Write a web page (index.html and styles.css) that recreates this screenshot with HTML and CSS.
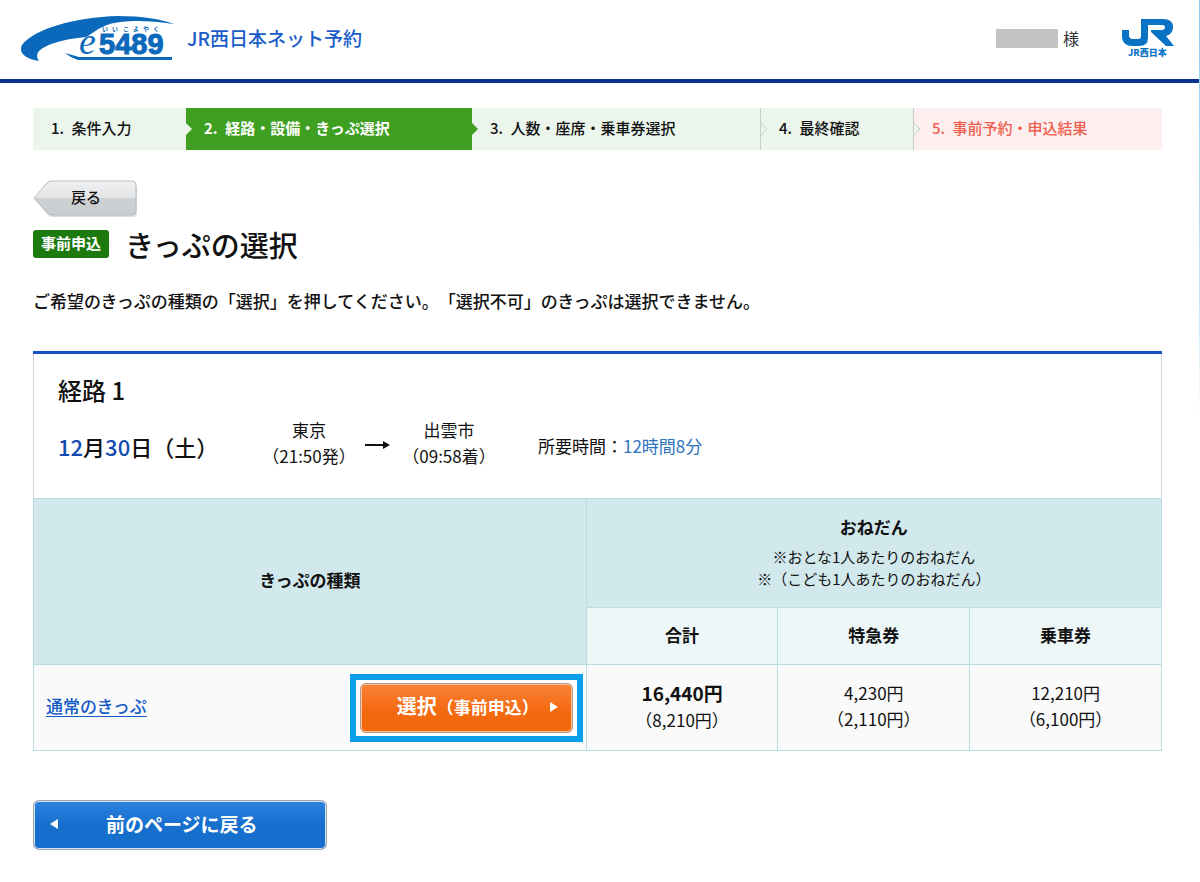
FILE: index.html
```html
<!DOCTYPE html>
<html lang="ja">
<head>
<meta charset="utf-8">
<meta name="viewport" content="width=device-width, initial-scale=1">
<title>きっぷの選択 | JR西日本ネット予約</title>
<link rel="stylesheet" href="styles.css">
</head>
<body>
<header class="site-header">
  <a class="brand" href="#" aria-label="e5489">
    <svg class="brand-logo" viewBox="0 -2 156 48" width="156" height="48" aria-hidden="true">
      <path fill="#0a69bb" d="M19 45C6 43-2 37 2 29C14 13 55 1 98 0C122 0 141 3 154 8C128 4 104 4 90 8C77 12 74 17 66 21C44 23 26 28 19 35C16 39 17 42 19 45Z"/>
      <path fill="#0a69bb" d="M45 37L59 41H152V44H58Q51 42 45 37Z"/>
      <text class="logo-ruby" x="82 92 103 113 123 133" y="15">いいこよやく</text>
      <text class="logo-e" x="59" y="38">e</text>
      <text class="logo-num" x="79" y="38">5489</text>
    </svg>
  </a>
  <span class="service-name">JR西日本ネット予約</span>
  <div class="user"><span class="user-mask"></span><span>様</span></div>
  <svg class="jr-logo" viewBox="0 0 54 40" width="54" height="40" role="img" aria-label="JR西日本">
    <path fill="#0873c4" d="M1 12H8V17Q8 21 12 21H17Q20 21 20 18V1H42Q52 1 52 9Q52 16 45 18L53 28H45L30 14V12H41Q44 12 44 9Q44 7 41 7H27V20Q27 28 18 28H12Q1 28 1 18Z"/>
    <text class="jr-name" x="7" y="38">JR西日本</text>
  </svg>
</header>

<main class="page">
  <ol class="steps">
    <li class="step">1.&ensp;条件入力</li>
    <li class="step step-current" aria-current="step">
      <svg class="step-mark" viewBox="0 0 8 14" width="8" height="14" aria-hidden="true"><path fill="#ebf5eb" d="M0 1L6 7L0 13Z"/></svg>
      2.&ensp;経路・設備・きっぷ選択</li>
    <li class="step">
      <svg class="step-mark" viewBox="0 0 8 14" width="8" height="14" aria-hidden="true"><path fill="#3f9f21" d="M0 1L6 7L0 13Z"/></svg>
      3.&ensp;人数・座席・乗車券選択</li>
    <li class="step step-line">
      <svg class="step-mark" viewBox="0 0 8 14" width="8" height="14" aria-hidden="true"><path fill="#ebf5eb" stroke="#c5cec6" d="M0 1L6 7L0 13"/></svg>
      4.&ensp;最終確認</li>
    <li class="step step-line step-result">
      <svg class="step-mark" viewBox="0 0 8 14" width="8" height="14" aria-hidden="true"><path fill="#ebf5eb" stroke="#c5cec6" d="M0 1L6 7L0 13"/></svg>
      5.&ensp;事前予約・申込結果</li>
  </ol>

  <button class="back-small" type="button">
    <svg class="back-shape" viewBox="0 0 106 38" width="106" height="38" aria-hidden="true">
      <defs>
        <linearGradient id="silver" x1="0" y1="0" x2="0" y2="1">
          <stop offset="0" stop-color="#f0f1f2"/><stop offset=".5" stop-color="#e2e4e6"/>
          <stop offset=".51" stop-color="#cdd1d4"/><stop offset="1" stop-color="#c9cdcf"/>
        </linearGradient>
      </defs>
      <path fill="#dcdcdc" d="M3 20L15 35Q17 37 20 37H100Q104 37 104 33V7Z"/>
      <path fill="url(#silver)" stroke="#b9bcbe" d="M1 18L14 3Q16 1 19 1H99Q103 1 103 5V31Q103 35 99 35H19Q16 35 14 33Z"/>
    </svg>
    <span class="back-label">戻る</span>
  </button>

  <div class="title-row">
    <span class="badge">事前申込</span>
    <h1 class="title">きっぷの選択</h1>
  </div>
  <p class="lead">ご希望のきっぷの種類の「選択」を押してください。「選択不可」のきっぷは選択できません。</p>

  <section class="route">
    <div class="route-info">
      <h2 class="route-title">経路 1</h2>
      <div class="route-row">
        <p class="date"><b>12</b>月<b>30</b>日（土）</p>
        <p class="station">東京<br>（21:50発）</p>
        <svg class="arrow" viewBox="0 0 26 10" width="26" height="10" aria-hidden="true"><path fill="#111" d="M0 4H18V1L25 5L18 9V6H0Z"/></svg>
        <p class="station">出雲市<br>（09:58着）</p>
        <p class="duration">所要時間：<span>12時間8分</span></p>
      </div>
    </div>
    <table class="fares">
      <colgroup><col class="col-kind"><col class="col-fare"><col class="col-fare"><col class="col-fare"></colgroup>
      <thead>
        <tr class="row-group">
          <th rowspan="2" scope="col">きっぷの種類</th>
          <th colspan="3" scope="colgroup">おねだん
            <span class="note">※おとな1人あたりのおねだん<br>※（こども1人あたりのおねだん）</span></th>
        </tr>
        <tr class="row-sub"><th scope="col">合計</th><th scope="col">特急券</th><th scope="col">乗車券</th></tr>
      </thead>
      <tbody>
        <tr>
          <td class="kind"><div class="kind-row">
            <a class="kind-link" href="#">通常のきっぷ</a>
            <div class="highlight"><button class="btn btn-select" type="button"><span>選択<span class="btn-sub">（事前申込）</span></span>
              <svg viewBox="0 0 8 10" width="8" height="10" aria-hidden="true"><path fill="#fff" d="M0 0L8 5L0 10Z"/></svg></button></div>
          </div></td>
          <td class="fare"><strong class="total">16,440円</strong><br>（8,210円）</td>
          <td class="fare">4,230円<br>（2,110円）</td>
          <td class="fare">12,210円<br>（6,100円）</td>
        </tr>
      </tbody>
    </table>
  </section>

  <button class="btn btn-back" type="button">
    <svg viewBox="0 0 8 10" width="8" height="10" aria-hidden="true"><path fill="#fff" d="M8 0L0 5L8 10Z"/></svg>
    <span>前のページに戻る</span>
  </button>
</main>
</body>
</html>
```
FILE: styles.css
```css
* { box-sizing: border-box; }
body {
  margin: 0;
  min-height: 100vh;
  background: linear-gradient(#8fcbf5, #c4e4fa 300px, #fff 420px) right top / 1px 420px no-repeat #fff;
  color: #111;
  font: 17px/26px "Noto Sans CJK JP", sans-serif;
  text-spacing-trim: space-all;
}
h1, h2, p, ol { margin: 0; padding: 0; }
button { font-family: inherit; cursor: pointer; }

.site-header {
  display: flex;
  align-items: center;
  height: 83px;
  margin-right: 1px;
  padding: 0 24px 3px 20px;
  border-bottom: 4px solid #0b3190;
}
.brand { display: flex; margin-right: 11px; }
.brand-logo { overflow: visible; }
.logo-ruby { fill: #0a69bb; font-size: 6px; font-weight: 700; }
.logo-e { fill: #0a69bb; font: italic 38px "Liberation Serif", serif; }
.logo-num { fill: #0a69bb; font: bold 29px "Liberation Sans", sans-serif; stroke: #0a69bb; stroke-width: 1; }
.service-name { color: #1a5cc8; font-size: 19px; font-weight: 500; }
.user { display: flex; align-items: center; gap: 5px; margin-left: auto; font-size: 16px; color: #333; }
.user-mask { width: 62px; height: 19px; background: #c3c3c3; }
.jr-logo { margin-left: 42px; }
.jr-name { fill: #0873c4; font-size: 9px; font-weight: 900; }

.page { padding: 25px 38px 32px 33px; }
.steps {
  display: grid;
  grid-template-columns: 153fr 286fr 288fr 153fr 249fr;
  list-style: none;
  font-size: 15px;
  font-weight: 500;
}
.step { position: relative; padding: 7px 0 9px 18px; background: #ebf5eb; white-space: nowrap; }
.step-current { background: #3f9f21; color: #fff; font-weight: 700; }
.step-line { border-left: 1px solid #c5cec6; }
.step-result { background: #fdeef0; color: #ee604c; }
.step-mark { position: absolute; left: 0; top: 14px; }

.back-small {
  position: relative;
  display: block;
  width: 106px;
  height: 38px;
  margin-top: 30px;
  padding: 0 0 6px;
  border: 0;
  background: none;
  color: #111;
  font-size: 15px;
  font-weight: 500;
}
.back-shape { position: absolute; left: 0; top: 0; }
.back-label { position: relative; }

.title-row { display: flex; align-items: center; gap: 16px; margin-top: 6px; }
.badge { padding: 0 8px 2px; border-radius: 3px; background: #1d7a0e; color: #fff; font-size: 15px; font-weight: 700; }
.title { font-size: 29px; line-height: 40px; font-weight: 500; }
.lead { margin-top: 24px; font-weight: 500; }

.route { margin-top: 37px; border-top: 3px solid #1650c4; }
.route-info { height: 144px; padding: 19px 24px 0; border: solid #d2d4d5; border-width: 0 1px; }
.route-title { font-size: 24px; line-height: 34px; font-weight: 500; }
.route-row { display: flex; align-items: center; margin-top: 10px; }
.date { width: 204px; padding-top: 6px; font-size: 22px; font-weight: 500; line-height: 32px; }
.date b { color: #124ab0; font-weight: 500; }
.station { width: 94px; text-align: center; }
.arrow { margin: 4px 11px 0 9px; }
.duration { margin-left: 42px; padding-top: 6px; }
.duration span { color: #3073bd; }

.fares { width: 100%; border-collapse: collapse; table-layout: fixed; }
.col-kind { width: 49%; }
.col-fare { width: 17%; }
.fares th, .fares td { padding: 0 0 3px; border: 1px solid #b9dde1; text-align: center; }
.fares th { font-weight: 700; background: #d1e8ec; }
.row-group { height: 109px; }
.row-sub { height: 57px; }
.fares .row-sub th { background: #eef7f7; }
.fares td { height: 86px; background: #fafafa; }
.fares .kind { padding: 0; }
.note { display: block; margin-top: 6px; font-size: 15px; line-height: 22px; font-weight: 400; }
.kind-row { display: flex; align-items: center; justify-content: space-between; padding: 0 3px 0 12px; }
.kind-link { padding-bottom: 4px; color: #155bc5; font-weight: 500; text-underline-offset: 3px; }
.total { font-size: 19px; }
.highlight { padding: 3px 4px; border: 6px solid #08a0ea; background: #fff; }

.btn { display: flex; align-items: center; border: 1px solid #aaa; border-radius: 6px; color: #fff; font-size: 19px; font-weight: 700; line-height: 28px; }
.btn-select {
  justify-content: space-between;
  width: 213px;
  height: 50px;
  padding: 0 14px 2px 36px;
  border-color: #b69a8b;
  background: linear-gradient(#fa8236, #f4680e 60%);
  box-shadow: inset 0 0 0 1px #f9c5a0;
  font-size: 20px;
}
.btn-sub { font-size: 17px; }
.btn-back {
  width: 294px;
  height: 50px;
  margin-top: 49px;
  padding: 0 16px 2px;
  border-color: #a5a6ad;
  background: linear-gradient(#2b83e0, #166fcd 50%);
  box-shadow: inset 0 0 0 1px #d5e5f8;
}
.btn-back span { margin-left: 48px; }
```
